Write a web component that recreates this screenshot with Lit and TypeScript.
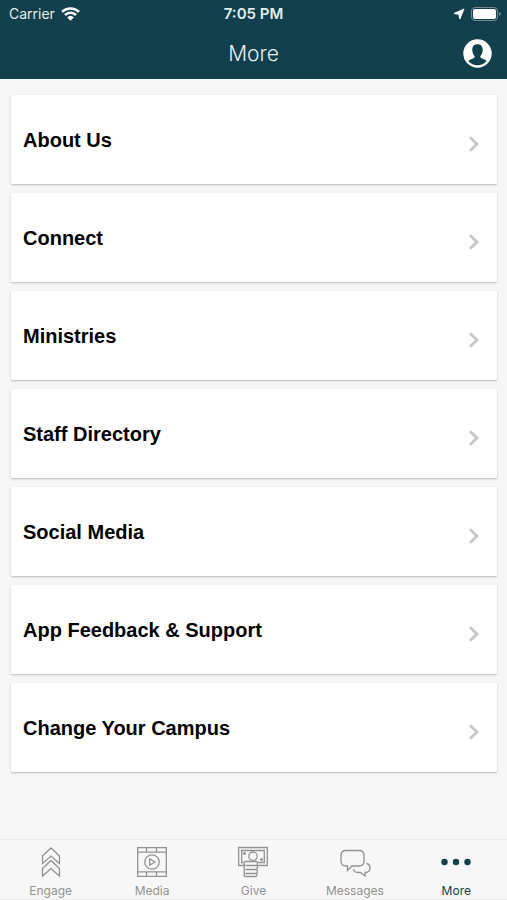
import { LitElement, html, css, svg, nothing } from "lit";
import { customElement, property } from "lit/decorators.js";

const tabs = [
  {
    label: "Engage",
    icon: svg`<path d="M7.500 11 16 3l8.500 8v7.500L16 11l-8.500 7.500zM7.500 23.500 16 15.500l8.500 8V31L16 23.500 7.500 31z"/>`,
  },
  {
    label: "Media",
    icon: svg`<path d="M1.700 2.700h28.600v28.600H1.700zM1.700 7.200h28.600M1.700 26.800h28.600M10.500 2.700v4.500M20.500 2.700v4.500M10.500 26.800v4.500M20.500 26.800v4.500"/><circle cx="16" cy="17" r="7.200"/><path d="M13.700 13.800v6.400l5.300-3.200z"/>`,
  },
  {
    label: "Give",
    icon: svg`<path d="M7 20.500H1.700V2.500h28.600v18H20.500M6.500 17.500H4.700v-12h22.600v12h-6.800"/><circle cx="16" cy="11.200" r="4.200"/><path d="M7.500 7v3M6 8.500h3M24.500 13v3M23 14.500h3M8.500 16.500h10.500q1.500 0 1.500 2t-1.500 2q1.500 0 1.500 2t-1.500 2q1.500 0 1.500 2t-1.500 2q1 0 1 1.500t-1.500 1.500H8.500q-1.500 0-1.500-1.500t1.500-1.500q-1.500 0-1.500-2t1.500-2q-1.500 0-1.500-2t1.500-2q-1.500 0-1.500-2t1.500-2zM9 20.500h10M9 24.500h10M9 28.500h10"/>`,
  },
  {
    label: "Messages",
    icon: svg`<path d="M7 5.500h13q5 0 5 5v5.500q0 5-5 5h-7L8.500 25.500V21H7q-5 0-5-5v-5.500q0-5 5-5z"/><path d="M27.500 18.500q3.500.500 3.500 4.500 0 4-4 4.500h-1V31l-4.500-3.500h-2.500q-4 0-4.500-3.500"/>`,
  },
  {
    label: "More",
    icon: svg`<g fill="currentColor" stroke="none"><circle cx="4.500" cy="17" r="3.200"/><circle cx="16" cy="17" r="3.200"/><circle cx="27.500" cy="17" r="3.200"/></g>`,
  },
];

@customElement("status-bar")
class StatusBar extends LitElement {
  static styles = css`
    :host {
      display: grid;
      grid-template-columns: 1fr auto 1fr;
      align-items: center;
      height: 28px;
      color: #e3edef;
      font-size: 14px;
      line-height: 20px;
    }
    .side {
      display: flex;
      align-items: center;
      gap: 6px;
      padding-left: 9px;
    }
    .end {
      justify-content: flex-end;
      padding: 0 6px 0 0;
    }
    .time {
      font-size: 15px;
      font-weight: 600;
    }
    svg {
      display: block;
    }
  `;

  render() {
    return html`
      <div class="side">
        <span>Carrier</span>
        <svg width="19" height="14" viewBox="0 0 19 14" fill="none" stroke="#fff" stroke-width="2.500" role="img" aria-label="Wi-Fi">
          <path d="M1 4.800a12.300 12.300 0 0 1 17 0M4 8a8 8 0 0 1 11 0" />
          <path d="M6.200 10.400a4.800 4.800 0 0 1 6.600 0L9.500 13.800z" fill="#fff" stroke="none" />
        </svg>
      </div>
      <span class="time">7:05 PM</span>
      <div class="side end">
        <svg width="12" height="12" viewBox="0 0 12 12" fill="#fff" stroke="#fff" stroke-linejoin="round" role="img" aria-label="Location">
          <path d="M11 1 6.800 11 5.800 6.300 1 5.500z" />
        </svg>
        <svg width="30" height="14" viewBox="0 0 30 14" role="img" aria-label="Battery">
          <rect x=".500" y=".500" width="26" height="13" rx="3.500" fill="none" stroke="#71898f" />
          <rect x="2" y="2" width="23" height="10" rx="2" fill="#fff" />
          <path d="M28 5q2 .800 2 2t-2 2z" fill="#71898f" />
        </svg>
      </div>
    `;
  }
}

@customElement("tab-bar")
class TabBar extends LitElement {
  @property() current = "More";

  static styles = css`
    nav {
      display: grid;
      grid-template-columns: repeat(5, 1fr);
      border-top: 1px solid #e9e9e9;
      border-bottom: 1px solid #ececec;
      background: #f7f7f7;
    }
    .tab {
      display: flex;
      flex-direction: column;
      align-items: center;
      gap: 4px;
      padding-top: 5px;
      color: #929292;
      font-size: 12px;
      line-height: 16px;
      text-decoration: none;
    }
    .tab[aria-current="page"] {
      color: #113f4b;
    }
    svg {
      display: block;
    }
  `;

  render() {
    return html`<nav>
      ${tabs.map(
        (t) => html`<a class="tab" href="#${t.label.toLowerCase()}" aria-current=${t.label === this.current ? "page" : nothing}>
          <svg width="32" height="34" viewBox="0 0 32 34" fill="none" stroke="currentColor" stroke-width="1.300" aria-hidden="true">${t.icon}</svg>
          <span>${t.label}</span>
        </a>`,
      )}
    </nav>`;
  }
}

@customElement("app-root")
class AppRoot extends LitElement {
  items = [
    "About Us",
    "Connect",
    "Ministries",
    "Staff Directory",
    "Social Media",
    "App Feedback & Support",
    "Change Your Campus",
  ];

  static styles = css`
    :host {
      display: flex;
      flex-direction: column;
      min-height: 100vh;
      background: #f6f6f6;
      font-family: Inter, "Liberation Sans", sans-serif;
    }
    header {
      background: #113f4b;
    }
    .bar {
      display: grid;
      grid-template-columns: 1fr auto 1fr;
      align-items: center;
      height: 51px;
      padding: 0 15px;
    }
    h1 {
      grid-column: 2;
      margin: 0;
      color: #e8f0f2;
      font-size: 21px;
      font-weight: 300;
      line-height: 28px;
    }
    .account {
      justify-self: end;
      padding: 0;
      border: 0;
      background: none;
    }
    svg {
      display: block;
    }
    main {
      flex: 1;
      padding: 16px 10px 16px 11px;
    }
    ul {
      display: flex;
      flex-direction: column;
      gap: 9px;
      margin: 0;
      padding: 0;
      list-style: none;
    }
    .card {
      display: flex;
      align-items: center;
      justify-content: space-between;
      height: 89px;
      padding: 0 16px 0 12px;
      border-radius: 1px;
      background: #fff;
      box-shadow: 0 1px 2px rgba(0, 0, 0, 0.24);
      color: #000;
      font: bold 20px/28px "Liberation Sans", Arial, sans-serif;
      text-decoration: none;
    }
    .chevron {
      margin-top: 8px;
    }
  `;

  render() {
    return html`
      <header>
        <status-bar></status-bar>
        <div class="bar">
          <h1>More</h1>
          <button class="account" aria-label="Account">
            <svg width="29" height="29" viewBox="0 0 29 29">
              <circle cx="14.500" cy="14.500" r="14.200" fill="#fff" />
              <path
                d="M14.500 5.200c3.600 0 5.400 2.300 5.200 6-.1 2.500-1 4.500-2.300 5.800v1.600c1.200 1.400 4.200 1.500 6.300 3.400a12 12 0 0 1-18.400 0c2.100-1.900 5.100-2 6.300-3.400V17c-1.300-1.300-2.200-3.300-2.300-5.800-.2-3.700 1.600-6 5.200-6z"
                fill="#113f4b"
              />
            </svg>
          </button>
        </div>
      </header>
      <main>
        <ul>
          ${this.items.map(
            (label) => html`<li>
              <a class="card" href="#">
                <span>${label}</span>
                <svg class="chevron" width="14" height="16" viewBox="0 0 14 16" fill="none" stroke="#c7c7c7" stroke-width="2.800" aria-hidden="true">
                  <path d="M3 1.200 10 8l-7 6.800" />
                </svg>
              </a>
            </li>`,
          )}
        </ul>
      </main>
      <tab-bar></tab-bar>
    `;
  }
}
